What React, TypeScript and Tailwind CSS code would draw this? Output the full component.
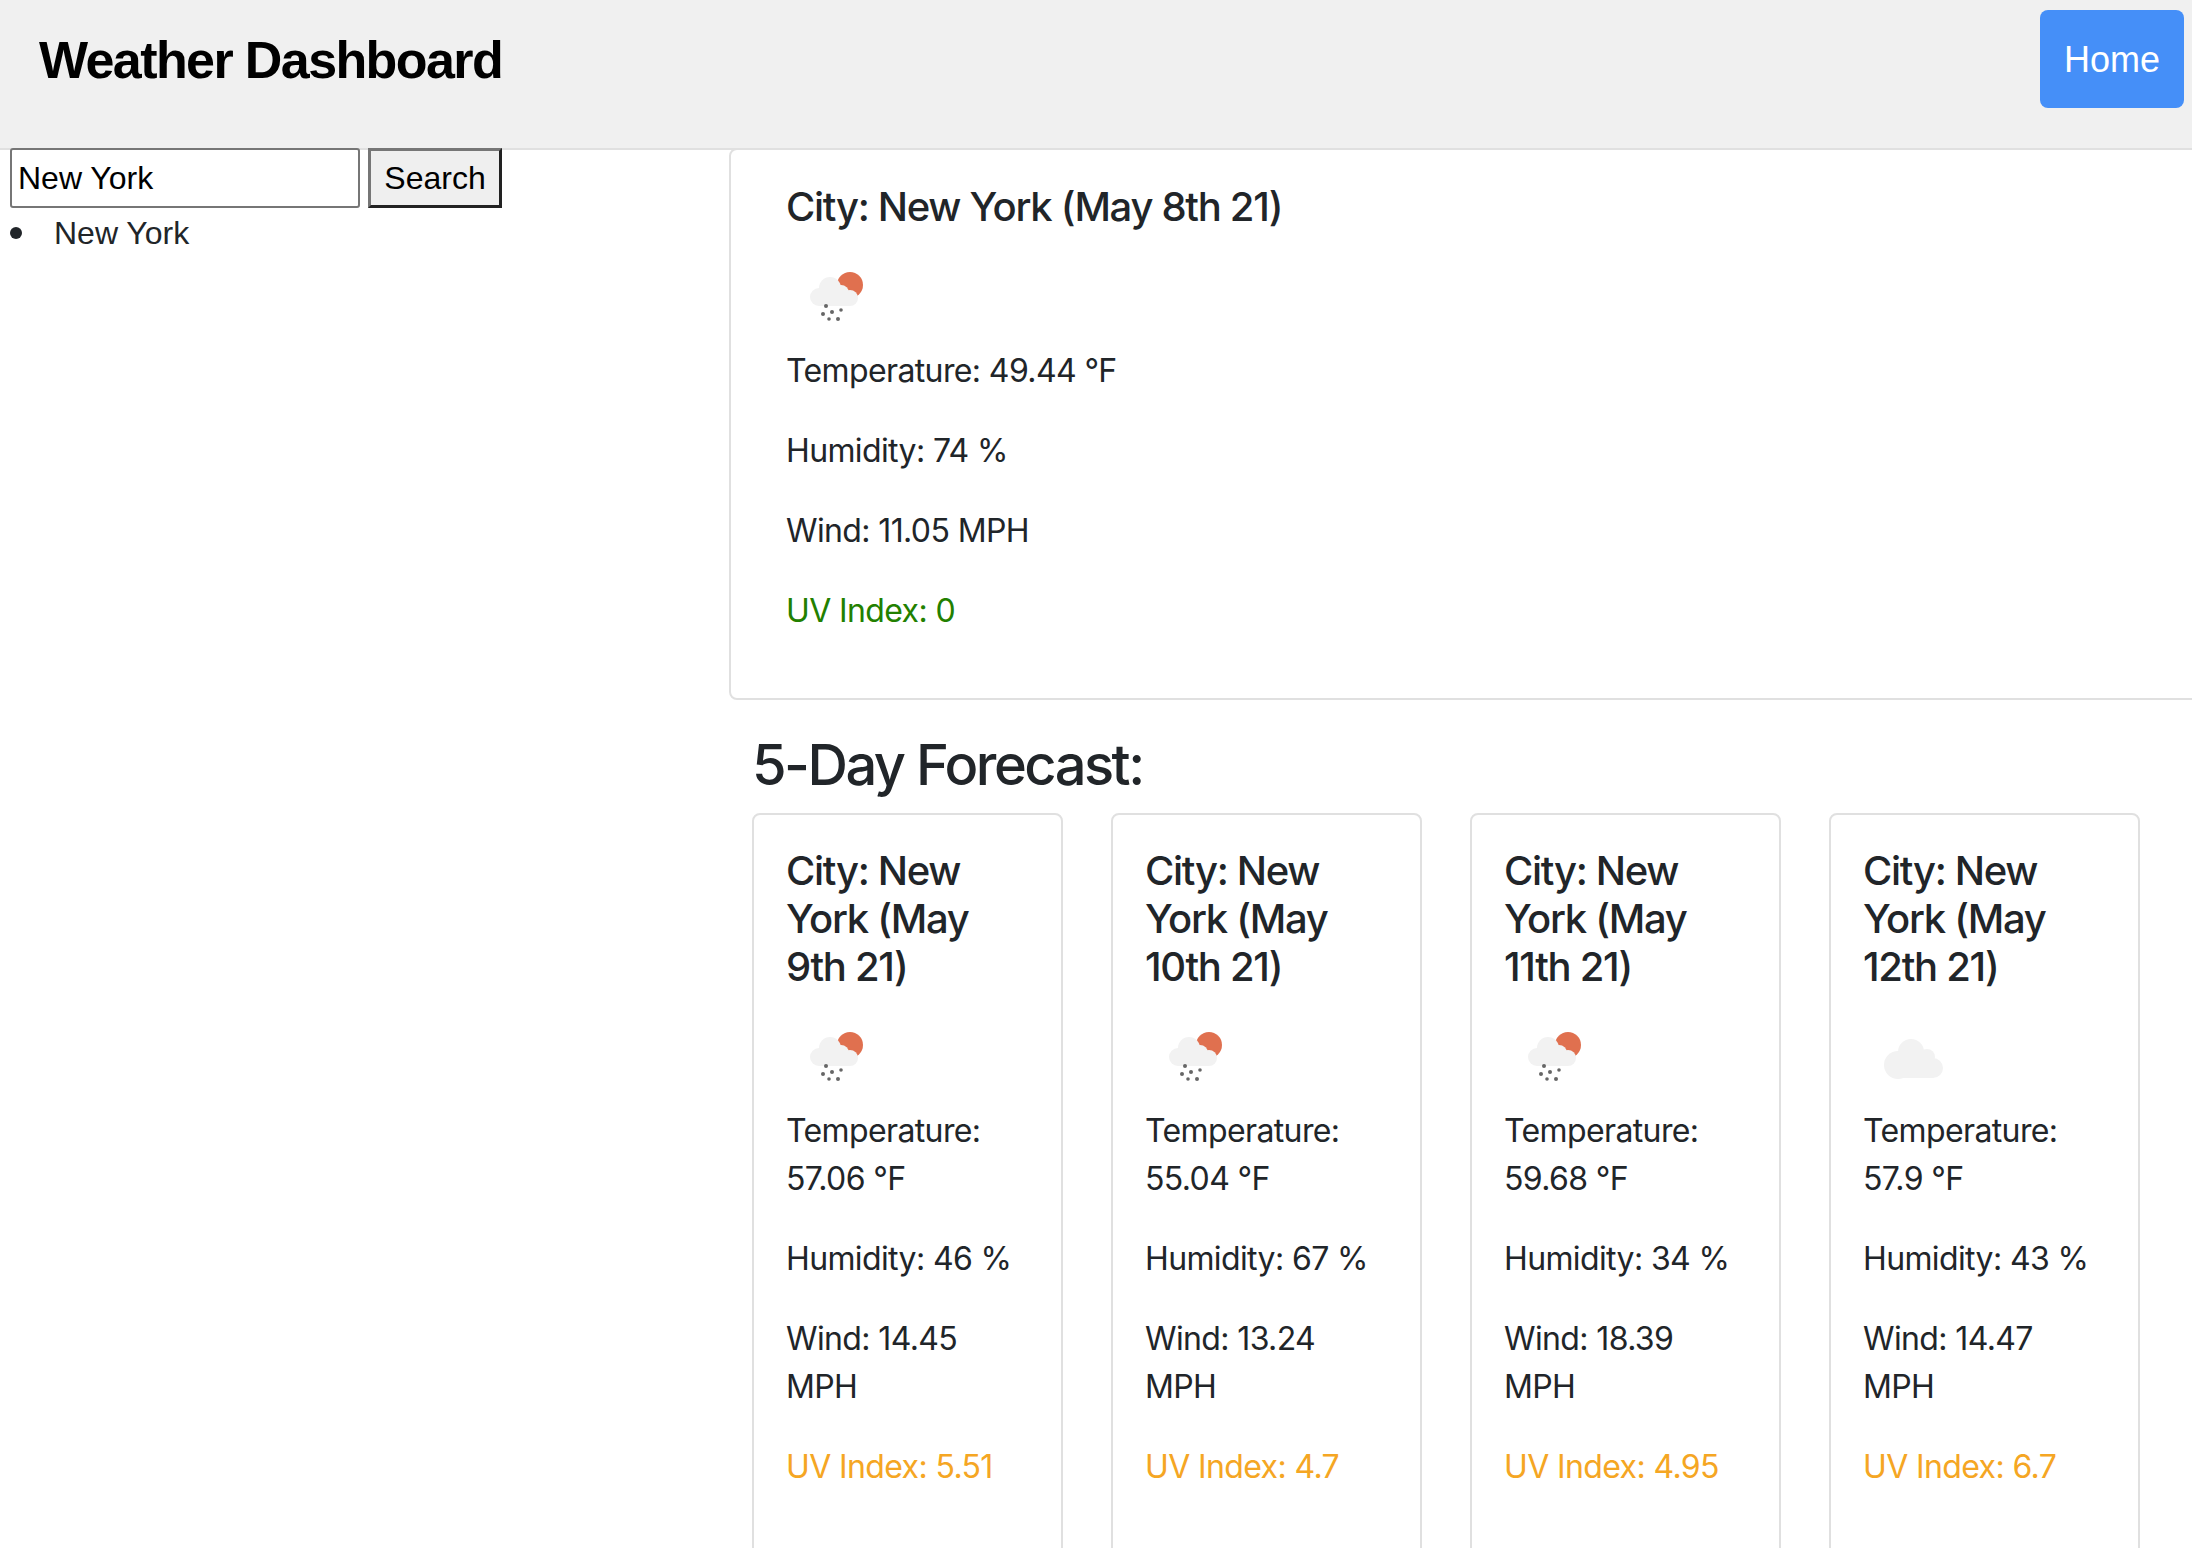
const forecast = [
  { date: 'May 9th 21', temp: '57.06', humidity: '46', wind: '14.45', uv: '5.51', rain: true },
  { date: 'May 10th 21', temp: '55.04', humidity: '67', wind: '13.24', uv: '4.7', rain: true },
  { date: 'May 11th 21', temp: '59.68', humidity: '34', wind: '18.39', uv: '4.95', rain: true },
  { date: 'May 12th 21', temp: '57.9', humidity: '43', wind: '14.47', uv: '6.7', rain: false },
]

function RainIcon() {
  return (
    <svg width="100" height="92" viewBox="0 0 100 92" className="blur-[0.6px]">
      <circle cx="64" cy="30" r="13" fill="#e0704f" />
      <g fill="#f2f2f2">
        <circle cx="33" cy="42" r="9" />
        <circle cx="44" cy="33" r="11" />
        <circle cx="55" cy="38" r="8" />
        <circle cx="64" cy="43" r="8" />
        <rect x="33" y="38" width="31" height="13" />
      </g>
      <g fill="#666">
        <circle cx="40" cy="51" r="2" />
        <circle cx="37" cy="59" r="2" />
        <circle cx="46" cy="57" r="2" />
        <circle cx="55" cy="55" r="1.8" />
        <circle cx="43" cy="64" r="1.8" />
        <circle cx="52" cy="64" r="2" />
      </g>
    </svg>
  )
}

function CloudIcon() {
  return (
    <svg width="100" height="92" viewBox="0 0 100 92" className="blur-[0.6px]">
      <g fill="#f2f2f2">
        <circle cx="35" cy="50" r="14" />
        <circle cx="48" cy="37" r="13" />
        <circle cx="64" cy="42" r="8" />
        <circle cx="70" cy="53" r="10" />
        <rect x="35" y="44" width="35" height="19" />
      </g>
    </svg>
  )
}

function Report({ title, temp, humidity, wind, uv, uvClass, rain }: {
  title: string
  temp: string
  humidity: string
  wind: string
  uv: string
  uvClass: string
  rain: boolean
}) {
  return (
    <>
      <h5 className="mb-6 text-[40px] leading-[48px] font-medium tracking-[-1.3px]">City: New York ({title})</h5>
      {rain ? <RainIcon /> : <CloudIcon />}
      <p className="mb-8 tracking-[-0.62px]">Temperature: {temp} °F</p>
      <p className="mb-8 tracking-[-0.62px]">Humidity: {humidity} %</p>
      <p className="mb-8 tracking-[-0.62px]">Wind: {wind} MPH</p>
      <p className={`mb-8 tracking-[-0.62px] ${uvClass}`}>UV Index: {uv}</p>
    </>
  )
}

export default function App() {
  return (
    <div className="h-[1548px] w-[2192px] overflow-hidden bg-white font-['Inter',sans-serif] text-[32px] leading-[48px] text-[#212529]">
      <header className="flex h-[150px] items-start justify-between border-b-2 border-[#e0e0e0] bg-[#f0f0f0] pl-[39px] pr-2">
        <h1 className="mt-[31px] font-['Liberation_Sans',sans-serif] text-[52px] leading-[58px] font-bold tracking-[-1.6px] text-black">Weather Dashboard</h1>
        <a className="mt-[10px] flex h-[98px] w-[144px] items-center justify-center rounded-lg bg-[#458ff8] pt-0.5 font-['Liberation_Sans',sans-serif] text-[36px] text-white">Home</a>
      </header>
      <div className="-mt-0.5 flex">
        <aside className="w-[729px] shrink-0 pl-[10px]">
          <div className="flex gap-[8px] font-['Liberation_Sans',sans-serif] text-[32px] text-black">
            <div className="flex h-[60px] w-[350px] items-center rounded-[3px] border-2 border-[#767676] pl-[6px]">New York</div>
            <button className="h-[60px] w-[134px] border-[3px] border-t-[#767676] border-l-[#767676] border-r-[#222] border-b-[#222] bg-[#efefef]">Search</button>
          </div>
          <ul className="mt-[1px] flex items-center font-['Liberation_Sans',sans-serif]">
            <li className="flex items-center">
              <span className="mr-[32px] h-3 w-3 rounded-full bg-[#212529]" />
              New York
            </li>
          </ul>
        </aside>
        <main className="flex-1">
          <div className="h-[552px] w-[1600px] rounded-lg border-2 border-[#e0e0e0] px-[55px] pt-[33px] pb-8">
            <Report title="May 8th 21" temp="49.44" humidity="74" wind="11.05" uv="0" uvClass="text-[#228000]" rain />
          </div>
          <div className="pl-[23px]">
            <h3 className="mt-[33px] mb-[16px] text-[56px] leading-[64px] font-medium tracking-[-2.5px]">5-Day Forecast:</h3>
            <div className="flex gap-[48px]">
              {forecast.map((day) => (
                <div key={day.date} className="h-[800px] w-[311px] shrink-0 rounded-lg border-2 border-[#e0e0e0] px-8 pt-8">
                  <Report
                    title={day.date}
                    temp={day.temp}
                    humidity={day.humidity}
                    wind={day.wind}
                    uv={day.uv}
                    uvClass="text-[#f5a623]"
                    rain={day.rain}
                  />
                </div>
              ))}
            </div>
          </div>
        </main>
      </div>
    </div>
  )
}
